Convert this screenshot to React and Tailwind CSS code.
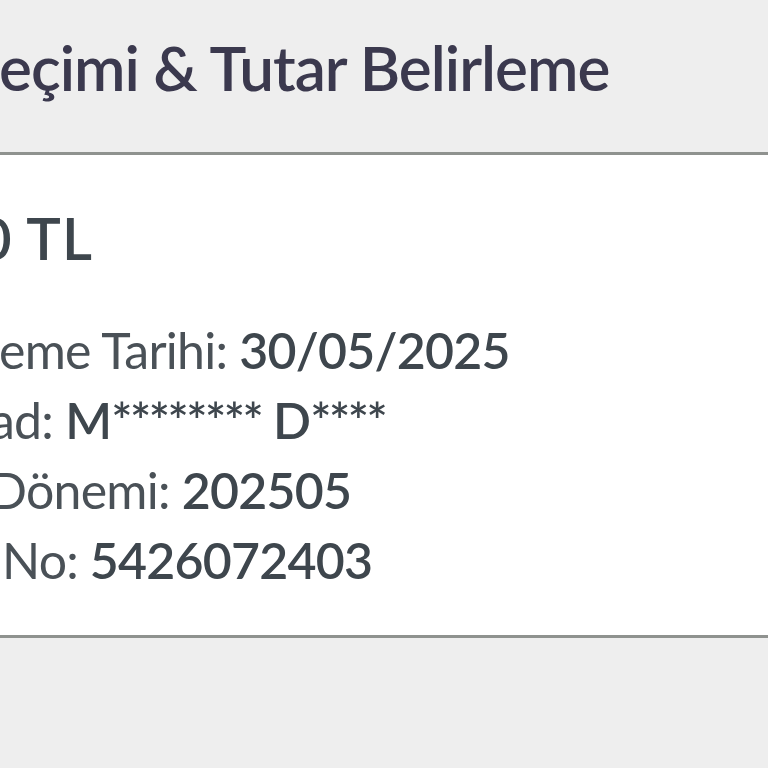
export default function App() {
  const font = { fontFamily: "Lato, 'Noto Sans', sans-serif" };
  return (
    <div className="w-[768px] h-[768px] overflow-hidden bg-[#eeeeee] flex flex-col" style={font}>
      <div className="h-[152px] shrink-0 flex items-start">
        <h1 className="mt-[30px] ml-[-1px] text-[62px] leading-[75px] font-semibold tracking-[-1px] text-[#3b394e] whitespace-nowrap">
          eçimi &amp; Tutar Belirleme
        </h1>
      </div>
      <div className="h-[486px] shrink-0 bg-white border-t-[3px] border-b-[3px] border-[#8f928f] flex flex-col">
        <div className="mt-[48px] ml-[-22px] text-[58px] leading-[70px] font-semibold tracking-[1px] text-[#3e464d] whitespace-nowrap">
          0 TL
        </div>
        <div className="mt-[42px] flex flex-col text-[50px] leading-[70px] tracking-[-0.75px] text-[#4a5157] whitespace-nowrap">
          <div className="ml-[-1px]">eme Tarihi: <span className="font-semibold text-[#3e464d]">30/05/2025</span></div>
          <div className="ml-[-10px]">ad: <span className="font-semibold text-[#3e464d]">M<span className="tracking-[-2.5px]">********</span> D<span className="tracking-[-2.5px]">****</span></span></div>
          <div className="ml-[-11px]">Dönemi: <span className="font-semibold text-[#3e464d]">202505</span></div>
          <div className="ml-[2px]">No:<span className="font-semibold text-[#3e464d]"> 5426072403</span></div>
        </div>
      </div>
    </div>
  );
}
